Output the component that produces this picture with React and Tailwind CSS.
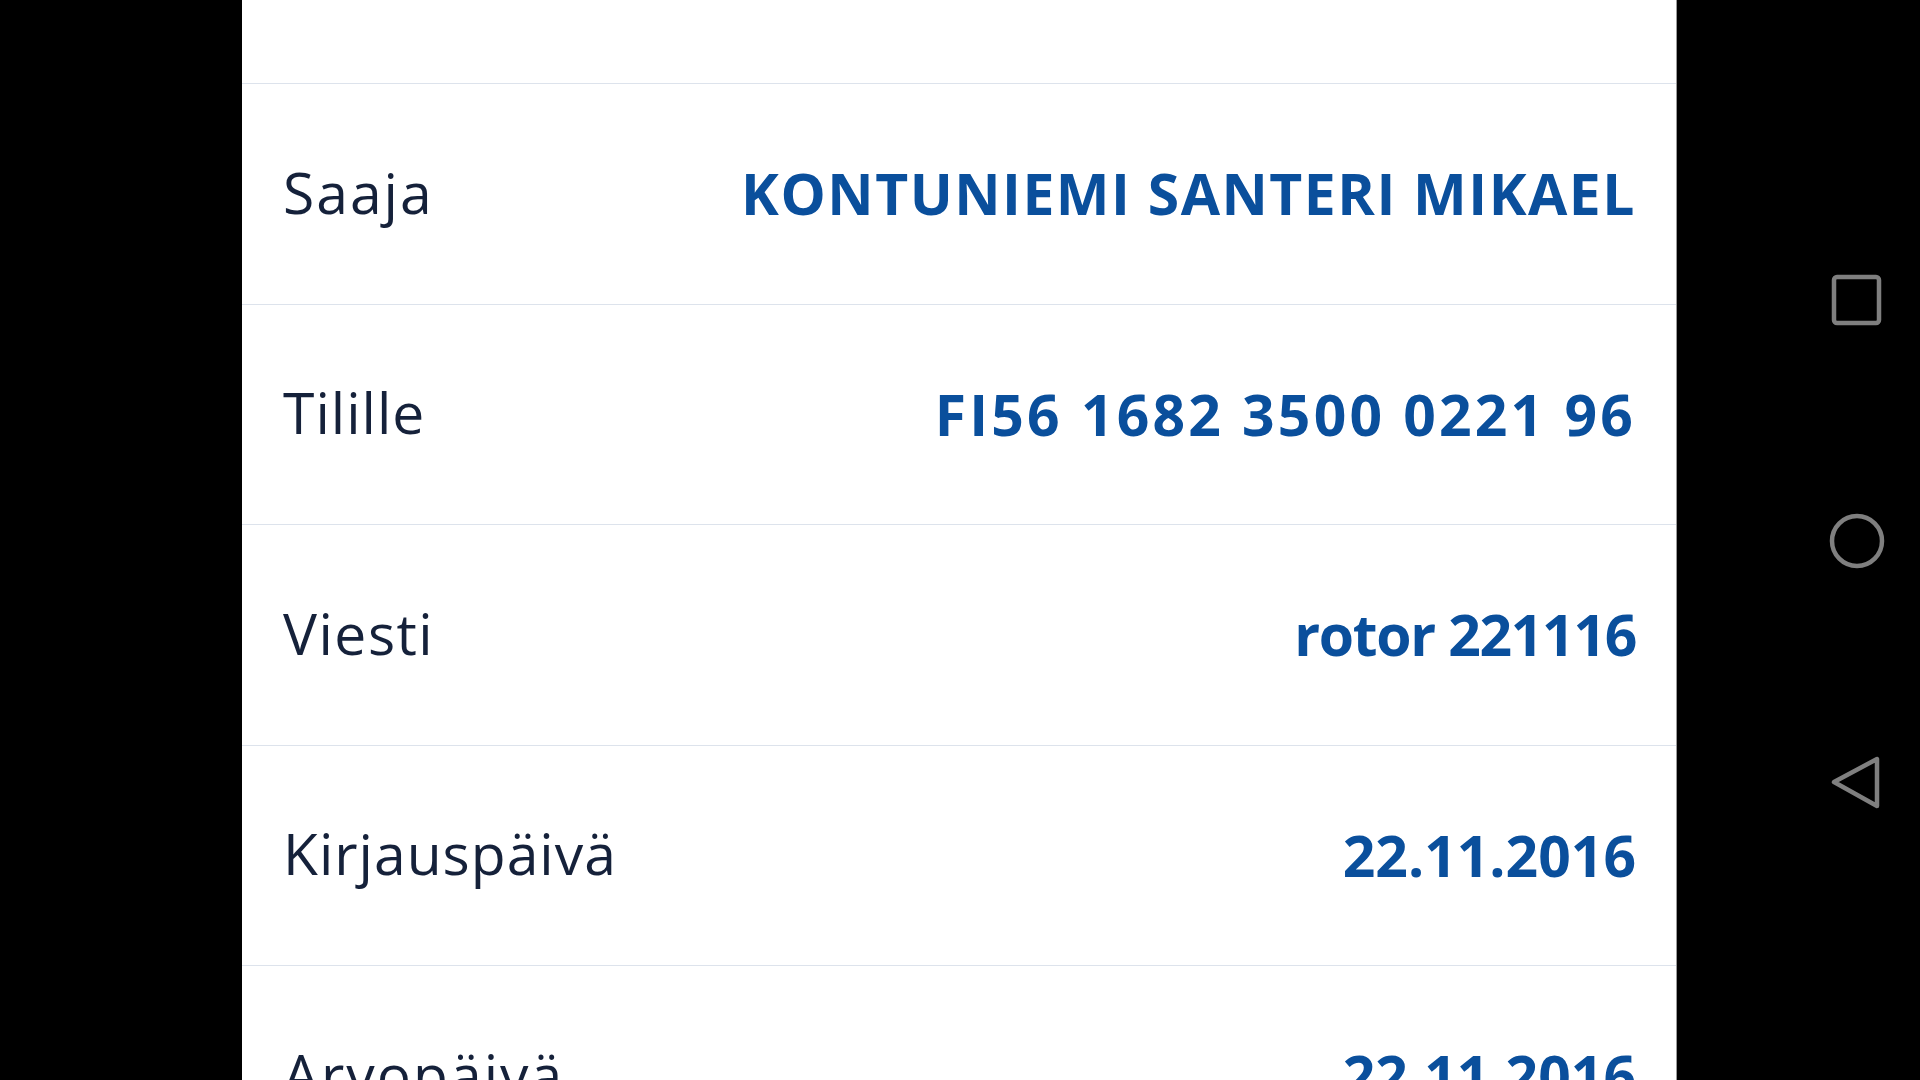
export default function App() {
  const rows = [
    ["Saaja", "KONTUNIEMI SANTERI MIKAEL", "tracking-[2px]", "tracking-[1.5px]"],
    ["Tilille", "FI56 1682 3500 0221 96", "tracking-[1px]", "tracking-[3.2px]"],
    ["Viesti", "rotor 221116", "tracking-[1.5px]", "tracking-[-1.3px]"],
    ["Kirjauspäivä", "22.11.2016", "tracking-[1px]", "tracking-[0px]"],
    ["Arvopäivä", "22.11.2016", "tracking-[2px]", "tracking-[0px]"],
  ];
  return (
    <div className="flex h-[1080px] w-[1920px] overflow-hidden bg-black" style={{ fontFamily: "'Open Sans', Lato, sans-serif" }}>
      <div className="w-[242px] shrink-0 bg-black" />
      <div className="w-[1435px] shrink-0 bg-white border-r border-[#9a9a9a]">
        <div className="h-[84px] border-b border-[#dde3ec]" />
        {rows.map(([label, value, lt, vt]) => (
          <div key={label} className="flex h-[220.5px] items-center justify-between border-b border-[#dde3ec] pl-[41px] pr-[42px]">
            <span className={`text-[57px] leading-none text-[#15213a] -mt-[3px] ${lt}`}>{label}</span>
            <span className={`text-[57px] font-bold leading-none text-[#0a4f9c] -mr-[2px] ${vt}`}>{value}</span>
          </div>
        ))}
      </div>
      <div className="flex flex-1 flex-col items-start pl-[154px]">
        <svg className="mt-[274px]" width="52" height="52" viewBox="0 0 52 52">
          <rect x="3" y="3" width="45" height="46" rx="3" fill="none" stroke="#7f7f7f" strokeWidth="4.5" />
        </svg>
        <svg className="mt-[186px] -ml-[3px]" width="58" height="58" viewBox="0 0 58 58">
          <circle cx="29" cy="29" r="25" fill="none" stroke="#7f7f7f" strokeWidth="4.5" />
        </svg>
        <svg className="mt-[186px]" width="54" height="60" viewBox="0 0 54 60">
          <path d="M3 26 L46 3 L46 50 Z" fill="none" stroke="#7f7f7f" strokeWidth="4.5" strokeLinejoin="round" />
        </svg>
      </div>
    </div>
  );
}
